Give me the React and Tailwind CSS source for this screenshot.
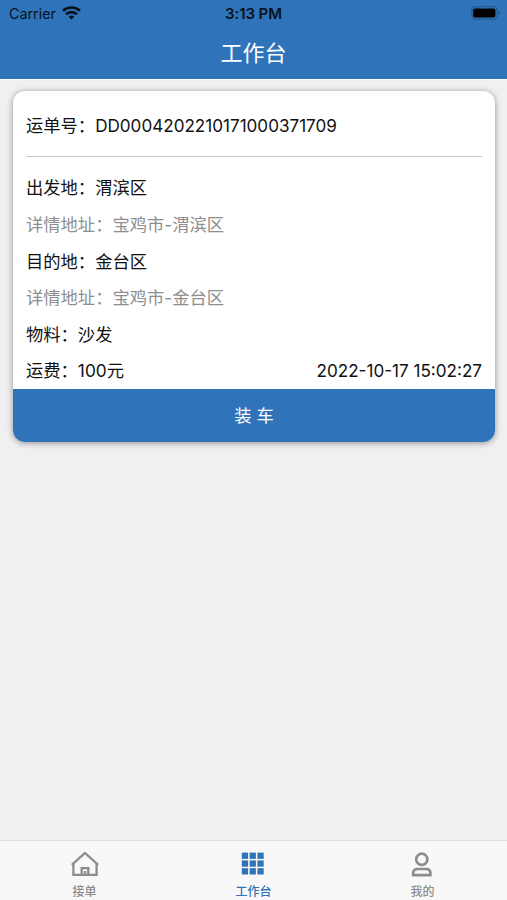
const rows = [
  { label: "出发地：", value: "渭滨区" },
  { label: "详情地址：", value: "宝鸡市-渭滨区", muted: true },
  { label: "目的地：", value: "金台区" },
  { label: "详情地址：", value: "宝鸡市-金台区", muted: true },
  { label: "物料：", value: "沙发" },
  { label: "运费：", value: "100元", time: "2022-10-17 15:02:27" },
]

function WifiIcon() {
  return (
    <svg className="w-[19px] h-[14px] -mt-[2px]" viewBox="0 0 19 14" fill="none" stroke="#08121d" strokeWidth="2.7">
      <path d="M1 4.7C5.6 .4 13.4 .4 18 4.7" />
      <path d="M4 8.2c3-2.9 8-2.9 11 0" />
      <path d="M9.5 13.5 6.6 10.7c1.6-1.5 4.2-1.5 5.8 0z" fill="#08121d" stroke="none" />
    </svg>
  )
}

function BatteryIcon() {
  return (
    <svg className="w-[30px] h-[14px] -mt-px" viewBox="0 0 30 14">
      <rect x=".8" y=".8" width="25.4" height="12.4" rx="3.4" fill="none" stroke="#225486" strokeWidth="1.1" />
      <rect x="2.2" y="2.4" width="22.2" height="9.2" rx="1.8" fill="#000" />
      <path d="M27.5 5v4c1.8-.7 1.8-3.3 0-4z" fill="#225486" />
    </svg>
  )
}

function HomeIcon() {
  return (
    <svg className="w-7 h-7" viewBox="0 0 28 28" fill="none" stroke="#8c8c8c" strokeWidth="2.3">
      <path d="M.8 14.8 14 3l13.2 11.8" />
      <path d="M2.4 13.5v11.4h23.2V13.5" />
      <path d="M10.7 24.9v-6.7h6.6v6.7" />
      <path d="M14 21v4" />
    </svg>
  )
}

function GridIcon() {
  return (
    <svg className="w-7 h-7" viewBox="0 0 28 28" fill="#2f73b8">
      {[2.6, 10.4, 18.2].map(y => [1.8, 9.6, 17.4].map(x => (
        <rect key={x + "-" + y} x={x} y={y} width="6.3" height="6.3" />
      )))}
    </svg>
  )
}

function UserIcon() {
  return (
    <svg className="w-7 h-7" viewBox="0 0 28 28" fill="none" stroke="#8c8c8c" strokeWidth="2.7">
      <circle cx="12.8" cy="9.3" r="5.6" />
      <path d="M4.2 25.2v-2c0-2.6 1.8-4.2 4.4-4.2h8.4c2.6 0 4.4 1.6 4.4 4.2v2z" />
    </svg>
  )
}

const tabs = [
  { name: "接单", icon: <HomeIcon />, color: "text-[#8c8c8c]" },
  { name: "工作台", icon: <GridIcon />, color: "text-[#2f73b8]" },
  { name: "我的", icon: <UserIcon />, color: "text-[#8c8c8c]" },
]

export default function App() {
  return (
    <div className="h-screen flex flex-col overflow-hidden bg-[#f0f0f0] font-['Inter','Noto_Sans_CJK_SC',sans-serif] text-[#111]">
      <header className="h-[79px] shrink-0 bg-[#2f74ba]">
        <div className="h-[27px] grid grid-cols-3 items-center pl-[9px] pr-[9px] text-[14.3px] text-[#08121d]">
          <div className="flex items-center gap-[6px]">
            <span>Carrier</span>
            <WifiIcon />
          </div>
          <span className="pt-px text-center font-semibold text-[15px] tracking-[-0.1px]">3:13 PM</span>
          <div className="flex justify-end -mr-[3px]">
            <BatteryIcon />
          </div>
        </div>
        <h1 className="h-[52px] text-center text-[22px] leading-[52px] text-white">工作台</h1>
      </header>

      <main className="flex-1 border-t border-[#fafafa] pl-[13px] pr-[12px] pt-[11px]">
        <section className="rounded-[12px] overflow-hidden bg-white shadow-[0_1px_6px_rgba(0,0,0,0.4)] text-[17.3px]">
          <div className="px-[13px]">
            <div className="flex h-[66px] items-center border-b border-[#c8c8c8] pt-[4px] whitespace-nowrap mb-[13px]">
              <span>运单号：</span>
              <span className="text-[17.1px]">DD0004202210171000371709</span>
            </div>
            {rows.map((r, i) => (
              <div key={i} className={"flex h-[36.6px] items-center whitespace-nowrap " + (r.muted ? "text-[#8e8e8e]" : "")}>
                <span>{r.label}</span>
                <span>{r.value}</span>
                {r.time && <span className="ml-auto text-[17.1px]">{r.time}</span>}
              </div>
            ))}
          </div>
          <button className="-mt-px block h-[53px] w-full bg-[#2f74ba] pt-[2px] text-center text-white">装 车</button>
        </section>
      </main>

      <nav className="h-[60px] shrink-0 grid grid-cols-3 border-t border-[#dcdcdc] bg-[#f8f8f8]">
        {tabs.map(t => (
          <div key={t.name} className={"flex flex-col items-center pt-[9px] " + t.color}>
            {t.icon}
            <span className="mt-[5px] text-[12px] leading-[18px] font-medium">{t.name}</span>
          </div>
        ))}
      </nav>
    </div>
  )
}
